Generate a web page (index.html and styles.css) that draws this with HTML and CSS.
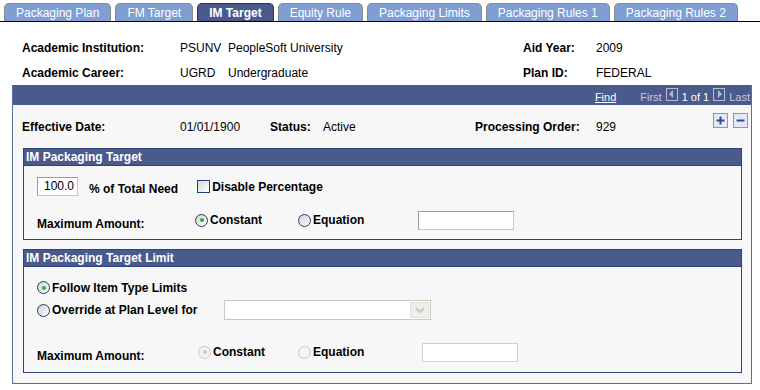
FILE: index.html
```html
<!DOCTYPE html>
<html lang="en">
<head>
    <meta charset="UTF-8">
    <title>IM Target</title>
    <link rel="stylesheet" href="styles.css">
</head>
<body>
    <div class="tabs">
        <div class="tab">Packaging Plan</div>
        <div class="tab">FM Target</div>
        <div class="tab active">IM Target</div>
        <div class="tab">Equity Rule</div>
        <div class="tab">Packaging Limits</div>
        <div class="tab">Packaging Rules 1</div>
        <div class="tab">Packaging Rules 2</div>
    </div>

    <div class="keys">
        <span class="lbl">Academic Institution:</span>
        <span>PSUNV</span>
        <span>PeopleSoft University</span>
        <span class="lbl">Aid Year:</span>
        <span>2009</span>
        <span class="lbl">Academic Career:</span>
        <span>UGRD</span>
        <span>Undergraduate</span>
        <span class="lbl">Plan ID:</span>
        <span>FEDERAL</span>
    </div>

    <div class="scroll">
        <div class="scroll-head">
            <a class="find" href="#">Find</a>
            <span class="nav-off">First</span>
            <span class="arrow"><svg width="9" height="10" viewBox="0 0 9 10"><path d="M6 1 L2 5 L6 9 Z" fill="#b4bccf"/></svg></span>
            <span class="count">1 of 1</span>
            <span class="arrow"><svg width="9" height="10" viewBox="0 0 9 10"><path d="M3 1 L7 5 L3 9 Z" fill="#b4bccf"/></svg></span>
            <span class="nav-off">Last</span>
        </div>
        <div class="scroll-body">
            <div class="eff-row">
                <div class="eff-fields">
                    <span class="lbl">Effective Date:</span>
                    <span>01/01/1900</span>
                    <span class="lbl">Status:</span>
                    <span>Active</span>
                    <span class="lbl">Processing Order:</span>
                    <span>929</span>
                </div>
                <div class="row-btns">
                    <span class="row-btn"><svg width="13" height="13" viewBox="0 0 13 13"><path d="M6.5 2.5 V10.5 M2.5 6.5 H10.5" stroke="#2f4c93" stroke-width="2"/></svg></span>
                    <span class="row-btn"><svg width="13" height="13" viewBox="0 0 13 13"><path d="M2.5 6.5 H10.5" stroke="#2f4c93" stroke-width="2"/></svg></span>
                </div>
            </div>

            <div class="group">
                <div class="group-head">IM Packaging Target</div>
                <div class="group-body first">
                    <div class="pct-row">
                        <span class="text-box pct">100.0</span>
                        <span class="lbl pct-lbl">% of Total Need</span>
                        <span class="check"></span>
                        <span class="lbl">Disable Percentage</span>
                    </div>
                    <div class="amt-row">
                        <span class="lbl amt-lbl">Maximum Amount:</span>
                        <span class="opt"><span class="radio on"></span><span class="lbl">Constant</span></span>
                        <span class="opt"><span class="radio"></span><span class="lbl">Equation</span></span>
                        <span class="text-box wide"></span>
                    </div>
                </div>
            </div>

            <div class="group">
                <div class="group-head">IM Packaging Target Limit</div>
                <div class="group-body second">
                    <div class="opt"><span class="radio on"></span><span class="lbl">Follow Item Type Limits</span></div>
                    <div class="override-row">
                        <span class="opt"><span class="radio"></span><span class="lbl">Override at Plan Level for</span></span>
                        <span class="select"><span class="select-btn"><svg width="12" height="8" viewBox="0 0 12 8"><path d="M2 2 L6 6 L10 2" stroke="#c8c8c8" stroke-width="2" fill="none"/></svg></span></span>
                    </div>
                    <div class="amt-row lower">
                        <span class="lbl amt-lbl">Maximum Amount:</span>
                        <span class="opt off"><span class="radio on dis"></span><span class="lbl">Constant</span></span>
                        <span class="opt off"><span class="radio dis"></span><span class="lbl">Equation</span></span>
                        <span class="text-box wide dis"></span>
                    </div>
                </div>
            </div>
        </div>
    </div>
</body>
</html>
```

FILE: styles.css
```css
body {
    margin: 0;
    width: 760px;
    font-family: "Liberation Sans", Arial, sans-serif;
    font-size: 12px;
    color: #000;
    background: #fff;
}
.lbl {
    font-weight: bold;
}
.tabs {
    display: flex;
    gap: 4px;
    padding: 3px 0 0 4px;
    border-bottom: 1px solid #000;
    height: 18px;
}
.tab {
    height: 17px;
    line-height: 18px;
    padding: 0 11px;
    background: #7f9ed2;
    color: #fff;
    font-size: 12px;
    border: 1px solid #8a8a8a;
    border-bottom: none;
    border-radius: 5px 5px 0 0;
}
.tab.active {
    background: #4a5a8c;
    font-weight: bold;
    border-color: #333;
}
.keys {
    display: grid;
    grid-template-columns: 158px 48px 295px 73px auto;
    grid-auto-rows: 25px;
    align-items: center;
    padding: 13px 0 0 22px;
}
.scroll {
    margin-left: 12px;
    width: 738px;
    border: 1px solid #5b6ca3;
    border-top: none;
    background: #f7f7f7;
}
.scroll-head {
    height: 20px;
    background: #4a5a8c;
    display: flex;
    justify-content: flex-end;
    align-items: center;
    gap: 4px;
    padding-right: 1px;
    font-size: 11px;
    color: #fff;
}
.find {
    color: #fff;
    margin-right: 20px;
    padding-top: 4px;
}
.nav-off {
    color: #c4cade;
    padding-top: 4px;
}
.count {
    padding-top: 4px;
}
.arrow {
    display: flex;
    align-items: center;
    justify-content: center;
    width: 10px;
    height: 11px;
    border: 1px solid #b4bccf;
    margin-bottom: 2px;
}
.scroll-body {
    padding: 0 0 10px 0;
}
.eff-row {
    display: flex;
    justify-content: space-between;
    height: 43px;
    padding: 0 3px 0 9px;
}
.eff-fields {
    display: grid;
    grid-template-columns: 158px 90px 53px 152px 121px auto;
    align-items: center;
    height: 14px;
    padding-top: 15px;
}
.row-btns {
    display: flex;
    gap: 5px;
    padding-top: 8px;
}
.row-btn {
    display: flex;
    align-items: center;
    justify-content: center;
    width: 13px;
    height: 13px;
    border: 1px solid #7e97c9;
    background: #e4ebf7;
}
.group {
    margin: 0 9px 9px 10px;
    border: 1px solid #2e4275;
}
.group:last-child {
    margin-bottom: 0;
}
.group-head {
    height: 16px;
    line-height: 16px;
    background: #4a5a8c;
    color: #fff;
    font-weight: bold;
    padding-left: 2px;
    border-bottom: 1px solid #2e4275;
}
.group-body {
    padding-left: 13px;
}
.group-body.first {
    padding-top: 11px;
    height: 62px;
}
.group-body.second {
    padding-top: 12px;
    height: 93px;
}
.pct-row {
    display: flex;
    align-items: center;
    height: 19px;
}
.text-box {
    display: inline-block;
    box-sizing: border-box;
    height: 19px;
    background: #fff;
    border: 1px solid #c8c8c8;
    border-top-color: #9c9c9c;
    border-left-color: #9c9c9c;
}
.text-box.pct {
    width: 41px;
    text-align: right;
    padding-right: 3px;
    line-height: 17px;
}
.pct-lbl {
    margin: 4px 19px 0 11px;
}
.check {
    box-sizing: border-box;
    width: 13px;
    height: 13px;
    border: 1px solid #1f3d78;
    background: linear-gradient(135deg, #d8d8d8, #fff);
    margin-right: 2px;
}
.amt-row {
    display: grid;
    grid-template-columns: 158px 103px 120px auto;
    align-items: center;
    margin-top: 13px;
    height: 19px;
}
.amt-row.lower {
    margin-top: 21px;
    grid-template-columns: 161px 100px 124px auto;
}
.amt-lbl {
    padding-top: 8px;
}
.wide {
    width: 96px;
}
.text-box.dis {
    border-color: #cfcfcf;
}
.opt {
    display: flex;
    align-items: center;
    gap: 2px;
    height: 17px;
}
.radio {
    position: relative;
    box-sizing: border-box;
    width: 13px;
    height: 13px;
    border-radius: 50%;
    border: 1px solid #1f3d78;
    background: linear-gradient(135deg, #d0d0d0, #fff);
}
.radio.on::after {
    content: "";
    position: absolute;
    left: 3.5px;
    top: 3.5px;
    width: 4px;
    height: 4px;
    border-radius: 50%;
    background: #27b227;
}
.radio.dis {
    border-color: #c8c8c8;
    background: #f4f4f4;
}
.radio.on.dis::after {
    background: #c8c8c8;
}
.override-row {
    display: flex;
    align-items: center;
    margin-top: 4px;
    height: 20px;
}
.select {
    display: flex;
    justify-content: flex-end;
    box-sizing: border-box;
    width: 207px;
    height: 20px;
    margin-left: 27px;
    background: #fff;
    border: 1px solid #cbc7bd;
}
.select-btn {
    display: flex;
    align-items: center;
    justify-content: center;
    width: 17px;
    margin: 1px;
    background: #eeeeea;
    border: 1px solid #e2e2dc;
}
```
